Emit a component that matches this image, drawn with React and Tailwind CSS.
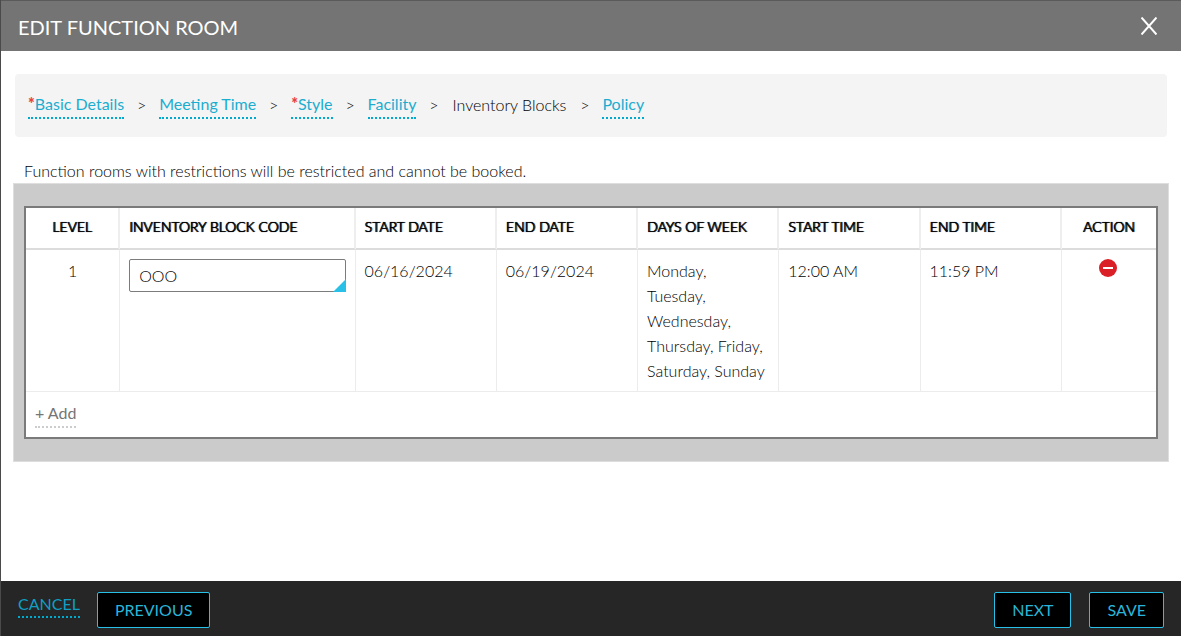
import React, { useState } from 'react';

const steps = [
    { label: 'Basic Details', required: true },
    { label: 'Meeting Time' },
    { label: 'Style', required: true },
    { label: 'Facility' },
    { label: 'Inventory Blocks', current: true },
    { label: 'Policy' },
];

const columns = [
    { label: 'Level', className: 'w-1/12 text-center' },
    { label: 'Inventory Block Code', className: 'w-5/24 text-left' },
    { label: 'Start Date', className: 'w-1/8 text-left' },
    { label: 'End Date', className: 'w-1/8 text-left' },
    { label: 'Days of Week', className: 'w-1/8 text-left' },
    { label: 'Start Time', className: 'w-1/8 text-left' },
    { label: 'End Time', className: 'w-1/8 text-left' },
    { label: 'Action', className: 'w-1/12 text-center' },
];

const initialBlocks = [
    {
        id: 1,
        code: 'OOO',
        startDate: '06/16/2024',
        endDate: '06/19/2024',
        days: 'Monday, Tuesday, Wednesday, Thursday, Friday, Saturday, Sunday',
        startTime: '12:00 AM',
        endTime: '11:59 PM',
    },
];

const cell = 'border-r border-b border-[#ececec] pb-2 pl-[9px] align-top';

const Steps = () => (
    <nav aria-label="Steps" className="rounded bg-[#f4f4f4] px-[13px] pt-[18px] pb-[18px]">
        <ol className="flex items-start">
            {steps.map((step, index) => (
                <li key={step.label} className="flex items-start">
                    {index > 0 && <span className="w-[35px] pt-px text-center leading-6 font-light">&gt;</span>}
                    {step.current ? (
                        <span aria-current="step" className="px-px pt-px leading-6 font-light">{step.label}</span>
                    ) : (
                        <a href="#" className="border-b-2 border-dotted border-[#00a9ce] pb-px leading-6 text-[#1badd0]">
                            {step.required && <span className="font-black text-[#e8413e]">*</span>}
                            {step.label}
                        </a>
                    )}
                </li>
            ))}
        </ol>
    </nav>
);

const FooterButton = ({ children }) => (
    <button
        type="button"
        className="h-9 rounded-[2px] border border-[#29c0e7] bg-black px-[17px] text-[#29b5d8] uppercase"
    >
        {children}
    </button>
);

const BlockRow = ({ block, level, onCodeChange, onRemove }) => (
    <tr>
        <td className={`${cell} pt-2 pr-[9px] text-center`}>{level}</td>
        <td className={`${cell} pt-[9px] pr-[9px]`}>
            <div className="relative">
                <input
                    type="text"
                    aria-label="Inventory Block Code"
                    value={block.code}
                    onChange={(e) => onCodeChange(block.id, e.target.value)}
                    className="block h-[33px] w-full rounded-[2px] border border-[#7c7c7c] bg-white px-[9px] outline-none"
                />
                <svg viewBox="0 0 13 13" className="absolute right-0 bottom-0 size-[13px]" aria-hidden="true">
                    <path d="M13 0v13H0z" fill="#29c0e7" />
                </svg>
            </div>
        </td>
        <td className={`${cell} pt-2 pr-[9px]`}>{block.startDate}</td>
        <td className={`${cell} pt-2 pr-[9px]`}>{block.endDate}</td>
        <td className={`${cell} pt-2 pr-3`}>{block.days}</td>
        <td className={`${cell} pt-2 pr-[9px]`}>{block.startTime}</td>
        <td className={`${cell} pt-2 pr-[9px]`}>{block.endTime}</td>
        <td className="border-b border-[#ececec] pt-[9px] pr-0.5 text-center align-top">
            <button type="button" aria-label="Remove" onClick={() => onRemove(block.id)} className="inline-block align-top">
                <svg viewBox="0 0 18 18" className="size-[18px]">
                    <circle cx="9" cy="9" r="9" fill="#da1f26" />
                    <rect x="4" y="8" width="10" height="2" fill="#fff" />
                </svg>
            </button>
        </td>
    </tr>
);

const App = () => {
    const [blocks, setBlocks] = useState(initialBlocks);

    const handleCodeChange = (id, code) => {
        setBlocks(blocks.map((b) => (b.id === id ? { ...b, code } : b)));
    };

    const handleRemove = (id) => {
        setBlocks(blocks.filter((b) => b.id !== id));
    };

    const handleAdd = () => {
        setBlocks([
            ...blocks,
            { id: Date.now(), code: '', startDate: '', endDate: '', days: '', startTime: '', endTime: '' },
        ]);
    };

    return (
        <div className="flex min-h-screen flex-col border-l border-[#4a4a4a] bg-white font-['Lato',sans-serif] text-base text-black">
            <header className="flex h-[51px] items-center justify-between border-t border-[#5a5a5a] bg-[#747474] pr-6 pl-[17px] text-white">
                <h1 className="pt-0.5 text-xl uppercase">Edit Function Room</h1>
                <button type="button" aria-label="Close">
                    <svg viewBox="0 0 16 18" className="h-[18px] w-4" fill="none" stroke="#fff" strokeWidth="2">
                        <path d="M0.5 0.5L15.5 17.5M15.5 0.5L0.5 17.5" />
                    </svg>
                </button>
            </header>

            <main className="flex-1 pt-[23px]">
                <div className="pr-3.5 pl-3.5">
                    <Steps />
                </div>

                <p className="px-[23px] pt-[22px] leading-6 font-light">
                    Function rooms with restrictions will be restricted and cannot be booked.
                </p>

                <div className="mr-3 ml-3 border border-[#dedede] bg-[#cbcbcb] px-2.5 pt-[22px] pb-[22px]">
                    <table className="w-full table-fixed border-separate border-spacing-0 border-2 border-[#7a7a7a] bg-white leading-[25px] font-light">
                        <thead>
                            <tr>
                                {columns.map((column) => (
                                    <th
                                        key={column.label}
                                        scope="col"
                                        className={`h-[42px] border-r-2 border-b-2 border-r-[#eeeeee] border-b-[#dcdcdc] px-[9px] pb-0.5 text-sm font-light text-black uppercase last:border-r-0 text-shadow-[0_0_0_#000000,1px_0_0_#000000,0_0_1px_#000000] ${column.className}`}
                                    >
                                        {column.label}
                                    </th>
                                ))}
                            </tr>
                        </thead>
                        <tbody>
                            {blocks.map((block, index) => (
                                <BlockRow
                                    key={block.id}
                                    block={block}
                                    level={index + 1}
                                    onCodeChange={handleCodeChange}
                                    onRemove={handleRemove}
                                />
                            ))}
                            <tr>
                                <td colSpan={8} className="px-[9px] pt-2 pb-[9px]">
                                    <button
                                        type="button"
                                        onClick={handleAdd}
                                        className="block border-b-2 border-dotted border-[#cccccc] pb-px font-normal text-[#757575]"
                                    >
                                        + Add
                                    </button>
                                </td>
                            </tr>
                        </tbody>
                    </table>
                </div>
            </main>

            <footer className="flex h-[55px] items-start bg-[#262626] pt-[11px] pr-[17px] pl-[17px]">
                <a href="#" className="mr-[17px] border-b-2 border-dotted border-[#00a9ce] leading-6 text-[#0f9fc4] uppercase">
                    Cancel
                </a>
                <FooterButton>Previous</FooterButton>
                <div className="ml-auto flex gap-[18px]">
                    <FooterButton>Next</FooterButton>
                    <FooterButton>Save</FooterButton>
                </div>
            </footer>
        </div>
    );
};

export default App;
